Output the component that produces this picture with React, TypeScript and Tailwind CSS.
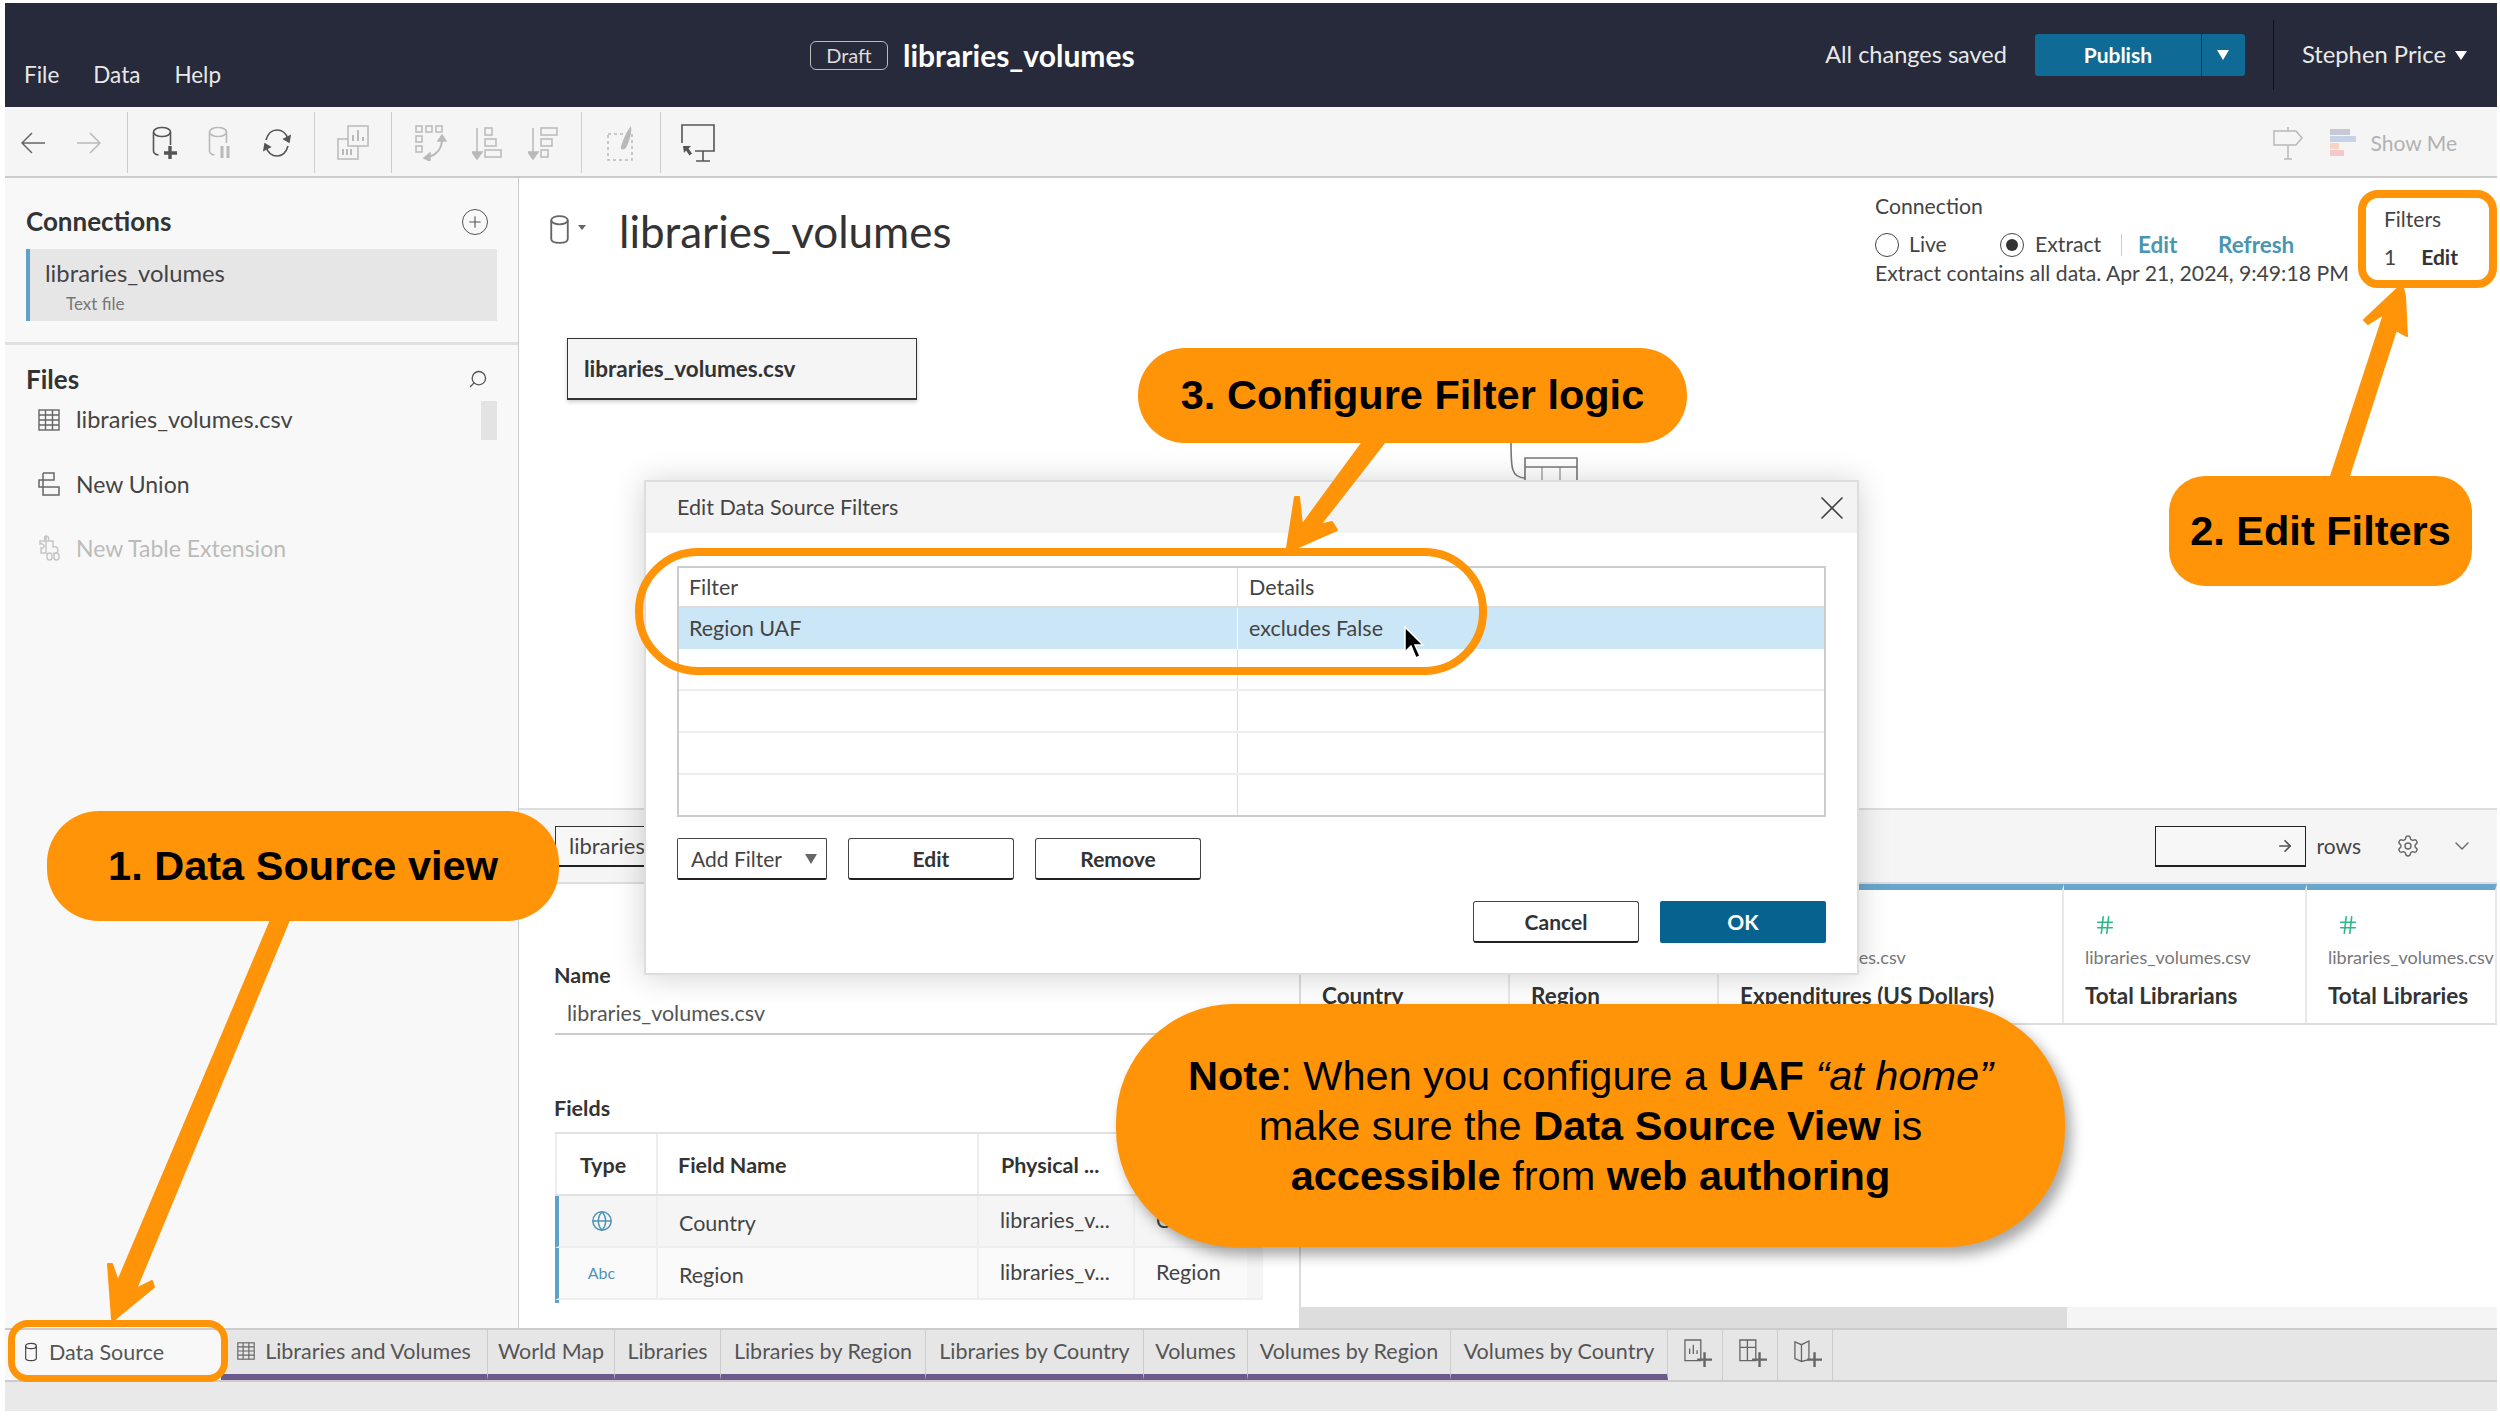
import { ReactNode } from "react";
import { Plus, Search, Settings, ChevronDown, X, ArrowRight, Hash, Globe } from "lucide-react";

const ORANGE = "#ff9408";

function Db({ className = "", stroke = "#666" }: { className?: string; stroke?: string }) {
  return (
    <svg viewBox="0 0 20 30" className={className} fill="none" stroke={stroke} strokeWidth="1.8">
      <ellipse cx="10" cy="6" rx="8" ry="4" />
      <path d="M2 6v18c0 2.5 3.5 4 8 4s8-1.5 8-4V6" />
    </svg>
  );
}

function ToolIcon({ children }: { children: ReactNode }) {
  return <div className="w-[56px] flex items-center justify-center">{children}</div>;
}

function Sep() {
  return <div className="w-px h-[61px] bg-[#ccc]" />;
}

function TableIcon({ className = "" }: { className?: string }) {
  return (
    <svg viewBox="0 0 22 22" className={className} fill="none" stroke="#666" strokeWidth="1.4">
      <rect x="1" y="1" width="20" height="20" />
      <path d="M1 6h20M1 11h20M1 16h20M7.5 1v20M14.5 1v20" />
    </svg>
  );
}

function Toolbar() {
  const dim = "#b9b9b9";
  return (
    <div className="h-[71px] shrink-0 bg-[#f5f5f5] border-b-2 border-[#ccc] flex items-start pt-[5px]">
      <div className="flex h-[61px]">
        <ToolIcon>
          <svg width="24" height="24" viewBox="0 0 24 24" fill="none" stroke="#666" strokeWidth="1.5">
            <path d="M24 12H1M11 2 1 12l10 10" />
          </svg>
        </ToolIcon>
        <ToolIcon>
          <svg width="24" height="24" viewBox="0 0 24 24" fill="none" stroke={dim} strokeWidth="1.5">
            <path d="M0 12h23M13 2l10 10-10 10" />
          </svg>
        </ToolIcon>
      </div>
      <div className="ml-[10px]"><Sep /></div>
      <div className="flex h-[61px] px-[9px]">
        <ToolIcon>
          <svg width="26" height="34" viewBox="0 0 26 34" fill="none" stroke="#555" strokeWidth="1.6">
            <ellipse cx="10" cy="6" rx="8.5" ry="4.5" />
            <path d="M1.5 6v19c0 2 2 3.5 5 4M18.5 6v13" />
            <path d="M18 20v13M12 27h13" strokeWidth="3.4" />
          </svg>
        </ToolIcon>
        <ToolIcon>
          <svg width="26" height="34" viewBox="0 0 26 34" fill="none" stroke={dim} strokeWidth="1.6">
            <ellipse cx="10" cy="6" rx="8.5" ry="4.5" />
            <path d="M1.5 6v19c0 2 2 3.5 5 4M18.5 6v11" />
            <path d="M14 20v12M20 20v12" strokeWidth="3" />
          </svg>
        </ToolIcon>
        <ToolIcon>
          <svg width="28" height="30" viewBox="0 0 28 30" fill="none" stroke="#555" strokeWidth="1.6">
            <path d="M3 12C5 5 9 2 14 2c5 0 9 3 11 9M25 18c-2 7-6 10-11 10-5 0-9-3-11-9" />
            <path d="M21 11l5 3 1-6zM7 19l-5-3-1 6z" fill="#555" />
          </svg>
        </ToolIcon>
      </div>
      <Sep />
      <div className="flex h-[61px] px-[10px]">
        <ToolIcon>
          <svg width="32" height="36" viewBox="0 0 32 36" fill="none" stroke={dim} strokeWidth="1.5">
            <rect x="11" y="1" width="20" height="20" />
            <path d="M16 16V10M21 16V5M26 16v-4" strokeWidth="2" />
            <path d="M11 14H1v20h20V21" />
            <path d="M6 30v-6M10 30v-6M14 30v-6" strokeWidth="2" />
          </svg>
        </ToolIcon>
      </div>
      <Sep />
      <div className="flex h-[61px] pl-[11px] pr-[10px]">
        <ToolIcon>
          <svg width="32" height="36" viewBox="0 0 32 36" fill="none" stroke={dim} strokeWidth="1.5">
            <rect x="1" y="1" width="6" height="6" />
            <rect x="11" y="1" width="6" height="6" />
            <rect x="21" y="1" width="6" height="6" />
            <rect x="1" y="11" width="6" height="6" />
            <rect x="1" y="21" width="6" height="6" />
            <path d="M27 14c0 10-6 16-14 18" strokeWidth="2" />
            <path d="M23 16l4-6 4 6zM15 28l-6 5 6 3z" fill={dim} />
          </svg>
        </ToolIcon>
        <ToolIcon>
          <svg width="30" height="34" viewBox="0 0 30 34" fill="none" stroke={dim} strokeWidth="1.5">
            <path d="M5 2v26" />
            <path d="M0 26l5 7 5-7z" fill={dim} />
            <rect x="13" y="2" width="7" height="7" />
            <rect x="13" y="13" width="11" height="7" />
            <rect x="13" y="24" width="16" height="7" />
          </svg>
        </ToolIcon>
        <ToolIcon>
          <svg width="30" height="34" viewBox="0 0 30 34" fill="none" stroke={dim} strokeWidth="1.5">
            <path d="M5 2v26" />
            <path d="M0 26l5 7 5-7z" fill={dim} />
            <rect x="13" y="2" width="16" height="7" />
            <rect x="13" y="13" width="11" height="7" />
            <rect x="13" y="24" width="7" height="7" />
          </svg>
        </ToolIcon>
      </div>
      <Sep />
      <div className="flex h-[61px] px-[11px]">
        <ToolIcon>
          <svg width="28" height="36" viewBox="0 0 28 36" fill="none" stroke={dim} strokeWidth="1.5">
            <rect x="1" y="9" width="24" height="26" strokeDasharray="3 3" />
            <path d="M14 22C16 14 20 6 24 1c1 6-1 14-5 22-2 2-6 2-5-1z" fill={dim} stroke="none" />
          </svg>
        </ToolIcon>
      </div>
      <Sep />
      <div className="flex h-[61px] pl-[9px]">
        <ToolIcon>
          <svg width="34" height="38" viewBox="0 0 34 38" fill="none" stroke="#555" strokeWidth="1.6">
            <path d="M1 19V1h32v26H14" />
            <path d="M22 27v10M15 37h14" />
            <path d="M2 22h8l-2.500 2.500 3.500 5-2.500 2-3.500-5L3 29z" fill="#555" stroke="none" />
          </svg>
        </ToolIcon>
      </div>
      <div className="ml-auto flex items-center h-[61px] pr-[40px]">
        <svg width="30" height="34" viewBox="0 0 30 34" fill="none" stroke={dim} strokeWidth="1.5">
          <path d="M15 1v4M15 20v13M11 33h8" />
          <path d="M1 5h22l6 7-6 7H1z" />
        </svg>
        <svg width="26" height="28" viewBox="0 0 26 28" className="ml-[27px]">
          <rect x="0" y="0" width="20" height="6" fill="#c9c9d6" />
          <rect x="0" y="7" width="26" height="6" fill="#c4d4e6" />
          <rect x="0" y="14" width="9" height="6" fill="#f6d5c4" />
          <rect x="0" y="21" width="14" height="6" fill="#f5c9c9" />
        </svg>
        <span className="ml-[15px] text-[21px] text-[#b2b2b2]">Show Me</span>
      </div>
    </div>
  );
}

function Sidebar() {
  return (
    <div className="w-[514px] shrink-0 bg-[#f8f8f8] border-r border-[#ccc] flex flex-col">
      <div className="flex items-center justify-between pl-[21px] pr-[30px] pt-[16px] h-[71px]">
        <span className="text-[26px] font-bold text-[#333]">Connections</span>
        <div className="w-[26px] h-[26px] rounded-full border-[1.5px] border-[#555] flex items-center justify-center">
          <Plus size={18} color="#555" strokeWidth={1.5} />
        </div>
      </div>
      <div className="ml-[21px] mr-[21px] h-[72px] bg-[#e6e6e6] border-l-[4px] border-[#5fa2c9] pl-[15px] pt-[9px]">
        <div className="text-[23.800px] leading-[30px] text-[#444]">libraries_volumes</div>
        <div className="text-[17px] leading-[26px] mt-[3px] pl-[21px] text-[#777]">Text file</div>
      </div>
      <div className="mt-[21px] h-[3px] bg-[#e0e0e0]" />
      <div className="flex items-center justify-between pl-[21px] pr-[30px] pt-[14px] h-[54px]">
        <span className="text-[26px] font-bold text-[#333]">Files</span>
        <Search size={20} color="#555" strokeWidth={1.6} className="-scale-x-100" />
      </div>
      <div className="relative flex items-center pl-[33px] h-[42px] text-[23.500px] text-[#444]">
        <TableIcon className="w-[22px] h-[22px] mr-[16px]" />
        libraries_volumes.csv
        <div className="ml-auto mr-[21px] w-[16px] h-[39px] bg-[#e3e3e3]" />
      </div>
      <div className="flex items-center pl-[33px] h-[40px] mt-[23px] text-[23px] text-[#444]">
        <svg width="22" height="24" viewBox="0 0 22 24" fill="none" stroke="#666" strokeWidth="1.5" className="mr-[16px]">
          <path d="M5 1h11v7H1v7h20v8H5V1" />
        </svg>
        New Union
      </div>
      <div className="flex items-center pl-[33px] h-[40px] mt-[24px] text-[23px] text-[#bbb]">
        <svg width="22" height="26" viewBox="0 0 22 26" fill="none" stroke="#c4c4c4" strokeWidth="1.4" className="mr-[16px]">
          <path d="M8 1c3 0 3 3 2 5h5v6c2-1 5 0 5 3s-3 4-5 3M8 18H3v-5c2 1 3-1 3-2s-2-3-4-2V6h6c-2-2-2-5 0-5z" />
          <rect x="9" y="18" width="5" height="7" rx="2.500" />
          <rect x="16" y="18" width="5" height="7" rx="2.500" />
        </svg>
        New Table Extension
      </div>
    </div>
  );
}

const FIELD_ROWS = [
  { type: "globe", name: "Country", remote: "Country", bg: "bg-[#f5f5f5]" },
  { type: "abc", name: "Region", remote: "Region", bg: "bg-[#fafafa]" },
];

function FieldsTable() {
  return (
    <div className="mt-[11px] ml-[36px] mr-[36px] border-t-2 border-[#e2e2e2] text-[21.500px] text-[#444]">
      <div className="flex h-[62px] border-b-2 border-[#e2e2e2] font-bold text-[#333] items-center">
        <div className="w-[103px] h-full pl-[23px] pt-[2px] flex items-center border-l-2 border-r-2 border-[#eee]">Type</div>
        <div className="w-[321px] h-full pl-[20px] pt-[2px] flex items-center border-r-2 border-[#eee]">Field Name</div>
        <div className="w-[156px] h-full pl-[22px] pt-[2px] flex items-center">Physical ...</div>
      </div>
      {FIELD_ROWS.map((r) => (
        <div key={r.name} className={`flex h-[52px] border-b-2 border-[#eee] border-l-[4px] border-l-[#5fa2c9] ${r.bg}`}>
          <div className="w-[99px] flex items-center justify-center pr-[12px] border-r-2 border-[#eee]">
            {r.type === "globe" ? (
              <Globe size={22} color="#4d94b8" strokeWidth={1.6} />
            ) : (
              <span className="text-[16px] text-[#4d94b8]">Abc</span>
            )}
          </div>
          <div className="w-[321px] pl-[21px] flex items-center pt-[4px] border-r-2 border-[#eee]">{r.name}</div>
          <div className="w-[156px] pl-[21px] flex items-center pb-[2px] border-r-2 border-[#eee]">libraries_v...</div>
          <div className="w-[112px] pl-[21px] flex items-center pb-[2px]">{r.remote}</div>
          <div className="flex-1 bg-[#f5f5f5]" />
        </div>
      ))}
      <div className="h-[3px] border-l-[4px] border-[#5fa2c9]" />
    </div>
  );
}

const GRID_COLS = [
  { name: "Country", w: "w-[209px]" },
  { name: "Region", w: "w-[209px]" },
  { name: "Expenditures (US Dollars)", w: "w-[345px]" },
  { name: "Total Librarians", w: "w-[243px]" },
  { name: "Total Libraries", w: "w-[190px]" },
];

function LowerPane() {
  return (
    <div className="flex-1 flex flex-col min-h-0">
      <div className="h-[76px] shrink-0 bg-[#f5f5f5] border-t-2 border-b-2 border-[#ddd] flex items-center pl-[36px]">
        <div className="w-[400px] h-[41px] bg-[#f7f7f7] border border-[#ccc] border-t-[#333] border-l-[#333] border-b-2 border-b-[#222] text-[22px] text-[#444] pl-[13px] flex items-center">
          libraries_volumes.csv
        </div>
        <div className="ml-auto w-[151px] h-[41px] bg-[#f7f7f7] border border-[#222] border-b-2 flex items-center justify-end pr-[11px]">
          <ArrowRight size={18} color="#555" strokeWidth={2.2} />
        </div>
        <span className="ml-[11px] text-[21px] text-[#444]">rows</span>
        <Settings size={24} color="#666" strokeWidth={1.4} className="ml-[35px]" />
        <ChevronDown size={24} color="#666" strokeWidth={1.4} className="ml-[30px] mr-[23px]" />
      </div>
      <div className="flex-1 flex min-h-0">
        <div className="w-[782px] shrink-0 border-r-2 border-[#ddd] pt-[78px]">
          <div className="pl-[35px] text-[21.500px] font-bold leading-[26px] text-[#333]">Name</div>
          <div className="ml-[36px] mt-[9px] pl-[12px] h-[38px] border-b-2 border-[#ccc] text-[21.500px] text-[#555]">libraries_volumes.csv</div>
          <div className="pl-[35px] mt-[60px] text-[21.500px] font-bold leading-[26px] text-[#333]">Fields</div>
          <FieldsTable />
        </div>
        <div className="flex-1 flex flex-col min-w-0">
          <div className="flex h-[141px] border-b-2 border-[#ddd]">
            {GRID_COLS.map((c) => (
              <div key={c.name} className={`${c.w} shrink-0 border-r-2 border-[#e8e8e8] border-t-[6px] border-t-[#69a6cc] pl-[21px]`}>
                <Hash size={22} color="#2eb88a" strokeWidth={1.8} className="mt-[24px] ml-[9px]" />
                <div className="mt-[11px] text-[18px] leading-[20px] text-[#777] whitespace-nowrap">libraries_volumes.csv</div>
                <div className="mt-[16px] text-[22.500px] leading-[26px] font-bold text-[#333] whitespace-nowrap">{c.name}</div>
              </div>
            ))}
          </div>
          <div className="flex-1" />
          <div className="h-[21px] shrink-0 bg-[#f5f5f5]">
            <div className="w-[766px] h-full bg-[#ddd]" />
          </div>
        </div>
      </div>
    </div>
  );
}

function DialogButton({ children, className = "" }: { children: ReactNode; className?: string }) {
  return (
    <div className={`h-[42px] w-[166px] bg-white border border-[#444] border-b-2 border-b-[#222] rounded-[3px] flex items-center justify-center text-[21px] font-bold text-[#333] ${className}`}>
      {children}
    </div>
  );
}

function FilterDialog() {
  return (
    <div className="absolute left-[644px] top-[480px] w-[1215px] h-[495px] z-10 bg-white border-2 border-[#ddd] shadow-[0_2px_30px_rgba(0,0,0,0.18)]">
      <div className="h-[51px] bg-[#f3f3f3] flex items-center justify-between pl-[31px] pr-[5px] text-[21.500px] text-[#444]">
        Edit Data Source Filters
        <X size={40} color="#444" strokeWidth={1} />
      </div>
      <div className="mx-[31px] mt-[33px] h-[251px] border-2 border-[#ccc] text-[21.500px] text-[#444]">
        <div className="flex h-[40px] border-b-2 border-[#ddd]">
          <div className="w-[559px] pl-[10px] flex items-center border-r border-[#ddd]">Filter</div>
          <div className="flex-1 pl-[11px] flex items-center">Details</div>
        </div>
        <div className="flex h-[41px] bg-[#cbe6f7]">
          <div className="w-[559px] pl-[10px] flex items-center border-r border-white">Region UAF</div>
          <div className="flex-1 pl-[11px] flex items-center">excludes False</div>
        </div>
        {[0, 1, 2, 3].map((i) => (
          <div key={i} className="flex h-[42px] border-b-2 border-[#eee] last:border-b-0 last:h-[40px]">
            <div className="w-[559px] border-r border-[#ddd]" />
          </div>
        ))}
      </div>
      <div className="flex mx-[31px] mt-[21px] gap-[21px]">
        <div className="h-[42px] w-[150px] border border-[#444] border-b-2 border-b-[#222] rounded-[2px] flex items-center justify-between pl-[13px] pr-[9px] text-[21px] text-[#444]">
          Add Filter
          <span className="w-0 h-0 border-x-[6px] border-x-transparent border-t-[10px] border-t-[#666]" />
        </div>
        <DialogButton>Edit</DialogButton>
        <DialogButton>Remove</DialogButton>
      </div>
      <div className="flex justify-end mr-[31px] mt-[21px] gap-[21px]">
        <DialogButton>Cancel</DialogButton>
        <div className="h-[42px] w-[166px] bg-[#066390] rounded-[2px] flex items-center justify-center text-[21px] font-bold text-white">OK</div>
      </div>
    </div>
  );
}

const TABS = [
  { name: "Libraries and Volumes", w: "w-[267px]", icon: true },
  { name: "World Map", w: "w-[127px]" },
  { name: "Libraries", w: "w-[106px]" },
  { name: "Libraries by Region", w: "w-[205px]" },
  { name: "Libraries by Country", w: "w-[218px]" },
  { name: "Volumes", w: "w-[104px]" },
  { name: "Volumes by Region", w: "w-[203px]" },
  { name: "Volumes by Country", w: "w-[217px]" },
];

function TabBar() {
  return (
    <div className="h-[54px] shrink-0 bg-[#e6e6e6] border-t-2 border-b-2 border-[#ccc] flex">
      <div className="w-[216px] shrink-0 bg-[#f8f8f8] flex items-center pl-[19px] pb-[6px] text-[21.500px] text-[#555]">
        <Db className="w-[14px] h-[20px] mr-[11px]" stroke="#444" />
        Data Source
      </div>
      {TABS.map((t) => (
        <div key={t.name} className={`${t.w} shrink-0 border-r border-[#ccc] border-b-[6px] border-b-[#6d5a8c] flex items-center justify-center pb-[2px] text-[21.500px] text-[#555] whitespace-nowrap`}>
          {t.icon && <TableIcon className="w-[18px] h-[18px] mr-[10px]" />}
          {t.name}
        </div>
      ))}
      {[0, 1, 2].map((i) => (
        <div key={i} className="w-[55px] shrink-0 border-r border-[#ccc] flex items-center justify-center pl-[5px] pb-[3px]">
          <svg width="28" height="30" viewBox="0 0 30 32" fill="none" stroke="#666" strokeWidth="1.4">
            {i === 0 && <path d="M1 1h17v22H1zM6 16v-6M10 16V6M14 16v-4" />}
            {i === 1 && <path d="M1 1h17v22H1zM1 9h17M9 1v22" />}
            {i === 2 && <path d="M1 3l7 3 8-4v20l-8 2-7-3zM8 6v18" />}
            <path d="M22 14v16M14 22h16" strokeWidth="2.6" />
          </svg>
        </div>
      ))}
    </div>
  );
}

function Callout({ children, className }: { children: ReactNode; className: string }) {
  return (
    <div className={`absolute z-20 bg-[#ff9408] flex items-center justify-center font-['Liberation_Sans',Arial,sans-serif] text-[41.500px] font-bold text-black ${className}`}>
      {children}
    </div>
  );
}

export default function App() {
  return (
    <div className="relative w-[2500px] h-[1416px] overflow-hidden bg-white pl-[5px] pr-[3px] pt-[3px] pb-[5px] flex flex-col font-[Lato,sans-serif]">
      <div className="h-[104px] shrink-0 bg-[#262a3a] flex text-white relative">
        <div className="flex gap-[34px] pl-[19px] pt-[55px] text-[22.500px] text-[#e8e8e8]">
          <span>File</span>
          <span>Data</span>
          <span>Help</span>
        </div>
        <div className="absolute left-[805px] top-[37px] flex items-center">
          <span className="w-[78px] h-[29px] border-[1.5px] border-[#bbb] rounded-[6px] text-[20px] leading-[26px] text-[#ddd] flex items-center justify-center">Draft</span>
          <span className="ml-[15px] text-[30px] leading-[30px] font-bold">libraries_volumes</span>
        </div>
        <div className="ml-auto flex items-center">
          <span className="text-[23.500px] text-[#e8e8e8] mr-[28px]">All changes saved</span>
          <div className="flex w-[210px] h-[42px] bg-[#0f6a95] rounded-[3px]">
            <div className="w-[167px] flex items-center justify-center text-[21px] font-bold border-r border-[#262a3a]">Publish</div>
            <div className="flex-1 flex items-center justify-center">
              <span className="w-0 h-0 border-x-[6px] border-x-transparent border-t-[10px] border-t-white" />
            </div>
          </div>
          <div className="w-px h-[70px] bg-[#111] ml-[28px] mr-[28px]" />
          <span className="text-[23.800px] text-[#e8e8e8]">Stephen Price</span>
          <span className="ml-[9px] mr-[30px] w-0 h-0 border-x-[6px] border-x-transparent border-t-[9px] border-t-white" />
        </div>
      </div>
      <Toolbar />
      <div className="flex-1 flex min-h-0">
        <Sidebar />
        <div className="flex-1 flex flex-col min-w-0">
          <div className="h-[630px] shrink-0 relative bg-white">
            <div className="flex items-start pl-[30px] pt-[36px]">
              <Db className="w-[21px] h-[31px]" />
              <span className="ml-[8px] mt-[11px] w-0 h-0 border-x-[4px] border-x-transparent border-t-[5px] border-t-[#666]" />
              <span className="ml-[33px] -mt-[1px] text-[44px] leading-[36px] text-[#333]">libraries_volumes</span>
            </div>
            <div className="ml-[48px] mt-[89px] w-[350px] h-[62px] bg-[#f5f5f5] border border-[#333] border-b-2 shadow-[0_2px_4px_rgba(0,0,0,0.2)] flex items-center pl-[16px] text-[22.500px] font-bold text-[#333]">
              libraries_volumes.csv
            </div>
            <div className="absolute right-[150px] top-[14px] text-[21.200px] text-[#444] w-[472px]">
              <div className="leading-[28px]">Connection</div>
              <div className="flex items-center mt-[12px] h-[26px]">
                <span className="w-[24px] h-[24px] rounded-full border-[1.5px] border-[#444]" />
                <span className="ml-[10px] w-[40px]">Live</span>
                <span className="ml-[51px] w-[24px] h-[24px] rounded-full border-[1.5px] border-[#444] flex items-center justify-center">
                  <span className="w-[12px] h-[12px] rounded-full bg-[#333]" />
                </span>
                <span className="ml-[11px] w-[67px]">Extract</span>
                <span className="ml-[19px] w-px h-[22px] bg-[#ccc]" />
                <span className="ml-[16px] w-[40px] text-[22.500px] font-bold text-[#4996b2]">Edit</span>
                <span className="ml-[40px] text-[22.500px] font-bold text-[#4996b2]">Refresh</span>
              </div>
              <div className="whitespace-nowrap">Extract contains all data. Apr 21, 2024, 9:49:18 PM</div>
            </div>
            <div className="absolute right-[39px] top-[25px] w-[74px] text-[21px] text-[#444]">
              <div>Filters</div>
              <div className="flex justify-between mt-[6px]">
                <span>1</span>
                <span className="font-bold text-[#333]">Edit</span>
              </div>
            </div>
            <svg className="absolute left-[988px] top-[244px]" width="90" height="60" viewBox="0 0 90 60" fill="none" stroke="#777" strokeWidth="1.6">
              <path d="M4 20c0 25 0 36 14 36" />
              <path d="M18 60V36H70V60M18 45H70" />
              <path d="M35 45V60M53 45V60" strokeWidth="1" />
            </svg>
          </div>
          <LowerPane />
        </div>
      </div>
      <TabBar />
      <div className="h-[29px] shrink-0 bg-[#e9e9e9]" />

      <FilterDialog />

      <div className="absolute z-20 left-[635px] top-[548px] w-[852px] h-[127px] rounded-[63px] border-[8px] border-[#ff9408]" />
      <div className="absolute z-20 left-[2358px] top-[190px] w-[139px] h-[98px] rounded-[20px] border-[8px] border-[#ff9408]" />
      <div className="absolute z-20 left-[8px] top-[1320px] w-[220px] h-[62px] rounded-[20px] border-[7px] border-[#ff9408]" />

      <Callout className="left-[47px] top-[811px] w-[512px] h-[110px] rounded-[52px]">1. Data Source view</Callout>
      <Callout className="left-[1138px] top-[348px] w-[549px] h-[95px] rounded-[47px]">3. Configure Filter logic</Callout>
      <Callout className="left-[2169px] top-[476px] w-[303px] h-[110px] rounded-[36px]">2. Edit Filters</Callout>
      <Callout className="left-[1116px] top-[1004px] w-[949px] h-[243px] rounded-[118px] leading-[50px] text-center shadow-[6px_8px_14px_rgba(0,0,0,0.35)]">
        <div className="font-normal">
          <div><b>Note</b>: When you configure a <b>UAF</b> <i>“at home”</i></div>
          <div>make sure the <b>Data Source View</b> is</div>
          <div><b>accessible</b> from <b>web authoring</b></div>
        </div>
      </Callout>

      <svg className="absolute inset-0 z-20 pointer-events-none" width="2500" height="1416" viewBox="0 0 2500 1416">
        <g fill={ORANGE} stroke={ORANGE} strokeWidth="2" strokeLinejoin="round">
          <path d="M271 920H289L136 1289 152 1281 154 1287 115 1319 112 1319 108 1264 112 1264 118 1281Z" />
          <path d="M2331 476H2349L2396 330 2407 336 2405 296 2403 288 2398 288 2364 320 2368 324 2384 314Z" />
          <path d="M1362 443H1384L1320 525 1332 522 1337 530 1296 548 1287 548 1295 497 1299 497 1302 525Z" />
        </g>
        <path d="M1405 627V652L1411 646 1416 658 1420 656 1415 645H1423Z" fill="#000" stroke="#fff" strokeWidth="1.5" />
      </svg>
    </div>
  );
}
